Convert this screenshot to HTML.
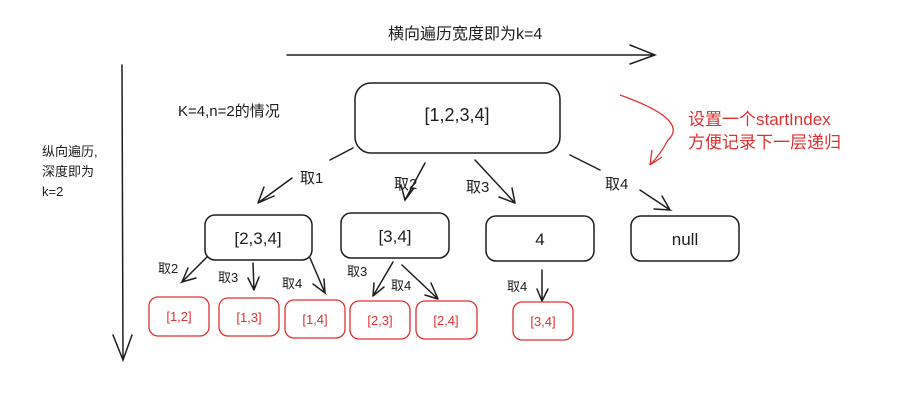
<!DOCTYPE html>
<html><head><meta charset="utf-8"><style>
body{margin:0;background:#fff;width:898px;height:409px;overflow:hidden}
svg text{font-family:"Liberation Sans","Noto Sans CJK SC",sans-serif;fill:#1e1e1e}
</style></head><body>
<svg width="898" height="409" viewBox="0 0 898 409" xmlns="http://www.w3.org/2000/svg">
<g fill="none" stroke="#1e1e1e" stroke-width="1.5" stroke-linecap="round">
<path d="M287 55 L655 55 M630 45 L655 55 L630 64"/>
<path d="M122 65 L123 360 M113 335 L123 360 L132 335"/>
<rect x="355" y="83" width="205" height="70" rx="16"/>
<rect x="205" y="215" width="107" height="45" rx="10"/>
<rect x="341" y="213" width="108" height="45" rx="10"/>
<rect x="486" y="216" width="108" height="45" rx="10"/>
<rect x="631" y="216" width="108" height="45" rx="10"/>
<path d="M353 148 L330 160 M292 178 L258 203 M258 203 L264 187 M258 203 L274 196"/>
<path d="M425 163 L405 200 L401 185 M405 200 L414 188"/>
<path d="M475 160 L515 203 L499 197 M515 203 L512 188"/>
<path d="M570 155 L600 170 M640 190 L670 210 L654 209 M670 210 L662 196"/>
<path d="M207 257 L182 282 L196 278 M182 282 L188 268"/>
<path d="M253 263 L254 290 L248 278 M254 290 L259 277"/>
<path d="M310 258 L325 293 L313 284 M325 293 L324 279"/>
<path d="M393 262 L373 296 L374 283 M373 296 L384 287"/>
<path d="M402 265 L438 299 L425 295 M438 299 L431 283"/>
<path d="M542 270 L542 301 L537 289 M542 301 L548 289"/>
</g>
<g fill="none" stroke="#e03131" stroke-width="1.3">
<rect x="149" y="297" width="60" height="39" rx="9"/>
<rect x="219" y="298" width="60" height="38" rx="9"/>
<rect x="285" y="300" width="60" height="38" rx="9"/>
<rect x="350" y="301" width="60" height="38" rx="9"/>
<rect x="416" y="301" width="61" height="38" rx="9"/>
<rect x="513" y="302" width="60" height="38" rx="9"/>
<path d="M620 95 Q690 120 668 140 Q660 155 650 165 M650 165 L652 150 M650 165 L662 157"/>
</g>
<text x="388" y="39" font-size="16">横向遍历宽度即为k=4</text>
<text x="178" y="116" font-size="15">K=4,n=2的情况</text>
<text x="42" y="156" font-size="13">纵向遍历,</text>
<text x="42" y="176" font-size="13">深度即为</text>
<text x="42" y="196" font-size="13">k=2</text>
<text x="457" y="121" font-size="18" text-anchor="middle">[1,2,3,4]</text>
<text x="258" y="244" font-size="17" text-anchor="middle">[2,3,4]</text>
<text x="395" y="242" font-size="17" text-anchor="middle">[3,4]</text>
<text x="540" y="245" font-size="17" text-anchor="middle">4</text>
<text x="685" y="245" font-size="17" text-anchor="middle">null</text>
<text x="300" y="183" font-size="15">取1</text>
<text x="394" y="189" font-size="15">取2</text>
<text x="466" y="192" font-size="15">取3</text>
<text x="605" y="189" font-size="15">取4</text>
<text x="158" y="273" font-size="13">取2</text>
<text x="218" y="282" font-size="13">取3</text>
<text x="282" y="288" font-size="13">取4</text>
<text x="347" y="276" font-size="13">取3</text>
<text x="391" y="290" font-size="13">取4</text>
<text x="507" y="291" font-size="13">取4</text>
<g font-size="13" text-anchor="middle" style="fill:#e03131">
<text x="179" y="321" style="fill:#e03131">[1,2]</text>
<text x="249" y="322" style="fill:#e03131">[1,3]</text>
<text x="315" y="324" style="fill:#e03131">[1,4]</text>
<text x="380" y="325" style="fill:#e03131">[2,3]</text>
<text x="446" y="325" style="fill:#e03131">[2,4]</text>
<text x="543" y="326" style="fill:#e03131">[3,4]</text>
</g>
<text x="688" y="125" font-size="17" style="fill:#e03131">设置一个startIndex</text>
<text x="688" y="148" font-size="17" style="fill:#e03131">方便记录下一层递归</text>
</svg>
</body></html>
